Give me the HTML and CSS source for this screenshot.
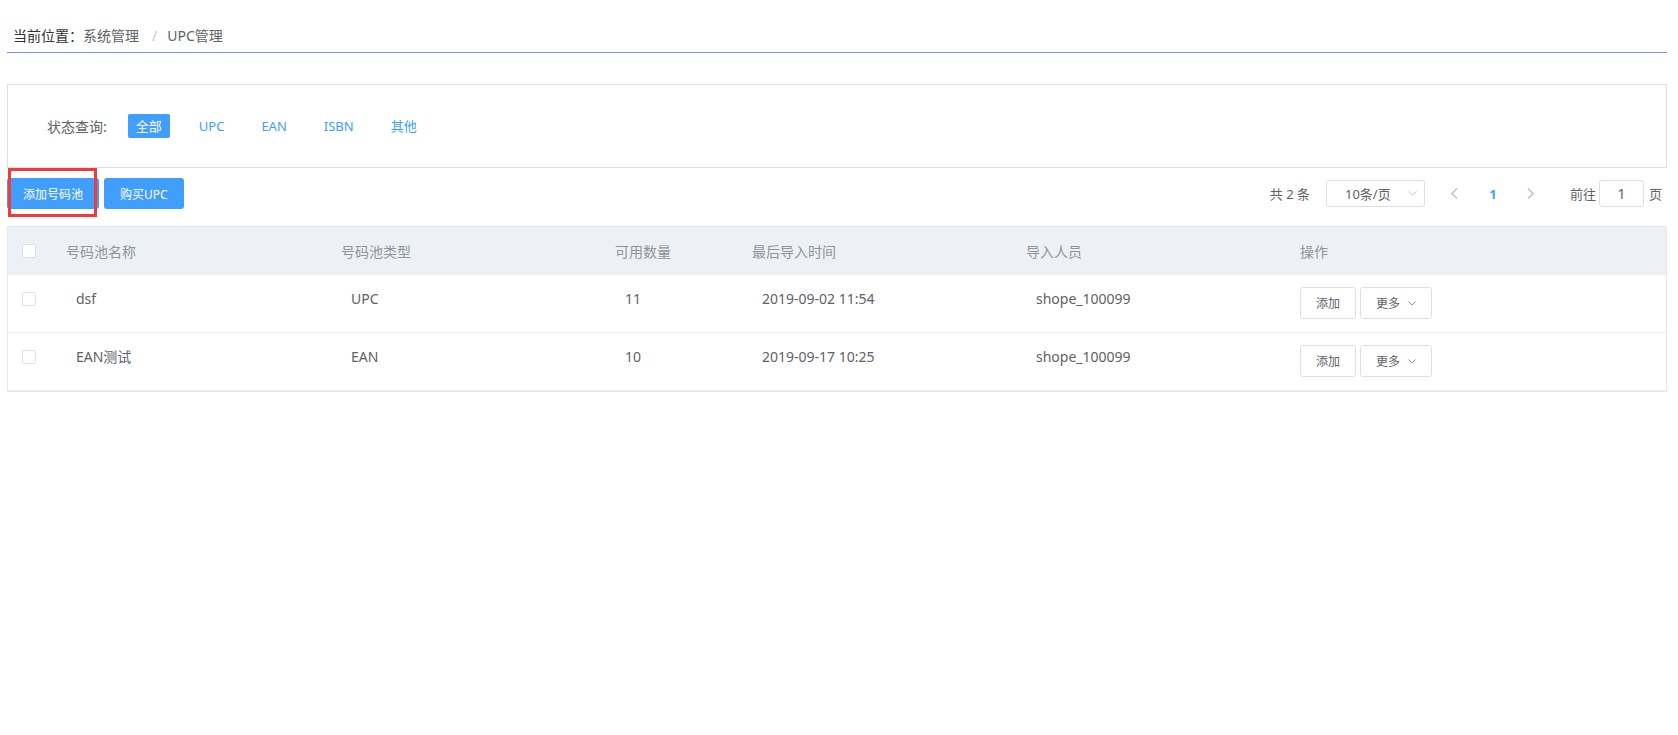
FILE: index.html
```html
<!DOCTYPE html>
<html>
<head>
    <meta charset="utf-8">
    <link rel="stylesheet" href="styles.css">
</head>
<body>
    <div class="page">
        <!-- Breadcrumb -->
        <div class="crumb"><span class="crumb-label">当前位置：</span><span class="crumb-item">系统管理</span><span class="crumb-sep">/</span><span class="crumb-item">UPC管理</span></div>

        <!-- Filter -->
        <div class="filter-panel">
            <span class="filter-label">状态查询:</span>
            <span class="filter-item active">全部</span>
            <span class="filter-item">UPC</span>
            <span class="filter-item">EAN</span>
            <span class="filter-item">ISBN</span>
            <span class="filter-item">其他</span>
        </div>

        <!-- Toolbar -->
        <div class="toolbar">
            <div class="toolbar-left">
                <span class="marked">
                    <button class="btn-primary">添加号码池</button>
                    <span class="red-box"></span>
                </span>
                <button class="btn-primary">购买UPC</button>
            </div>
            <div class="pager">
                <span class="pager-total">共 2 条</span>
                <div class="pager-size">
                    <span>10条/页</span>
                    <svg width="9" height="5" viewBox="0 0 9 5"><polyline points="0.5,0.5 4.5,4.2 8.5,0.5" fill="none" stroke="#c0c4cc" stroke-width="1"/></svg>
                </div>
                <span class="pager-btn pager-prev">
                    <svg width="7" height="11" viewBox="0 0 7 11"><polyline points="6,0.5 1,5.5 6,10.5" fill="none" stroke="#c0c4cc" stroke-width="1.6"/></svg>
                </span>
                <span class="pager-num">1</span>
                <span class="pager-btn">
                    <svg width="7" height="11" viewBox="0 0 7 11"><polyline points="1,0.5 6,5.5 1,10.5" fill="none" stroke="#c0c4cc" stroke-width="1.6"/></svg>
                </span>
                <span class="pager-goto">前往</span>
                <span class="pager-input">1</span>
                <span class="pager-unit">页</span>
            </div>
        </div>

        <!-- Table -->
        <div class="table">
            <div class="table-head">
                <div class="cell-check"><span class="checkbox"></span></div>
                <div class="th">号码池名称</div>
                <div class="th">号码池类型</div>
                <div class="th">可用数量</div>
                <div class="th">最后导入时间</div>
                <div class="th">导入人员</div>
                <div class="th">操作</div>
            </div>
            <div class="table-row">
                <div class="cell-check"><span class="checkbox"></span></div>
                <div class="td">dsf</div>
                <div class="td">UPC</div>
                <div class="td">11</div>
                <div class="td">2019-09-02 11:54</div>
                <div class="td">shope_100099</div>
                <div class="td-actions">
                    <button class="btn-small">添加</button>
                    <button class="btn-small">更多<svg width="8" height="5" viewBox="0 0 8 5"><polyline points="0.5,0.5 4,4 7.5,0.5" fill="none" stroke="#909399" stroke-width="1"/></svg></button>
                </div>
            </div>
            <div class="table-row">
                <div class="cell-check"><span class="checkbox"></span></div>
                <div class="td">EAN测试</div>
                <div class="td">EAN</div>
                <div class="td">10</div>
                <div class="td">2019-09-17 10:25</div>
                <div class="td">shope_100099</div>
                <div class="td-actions">
                    <button class="btn-small">添加</button>
                    <button class="btn-small">更多<svg width="8" height="5" viewBox="0 0 8 5"><polyline points="0.5,0.5 4,4 7.5,0.5" fill="none" stroke="#909399" stroke-width="1"/></svg></button>
                </div>
            </div>
        </div>
    </div>
</body>
</html>
```

FILE: styles.css
```css
body {
    margin: 0;
    background-color: #fff;
    font-family: "Noto Sans", "Noto Sans CJK SC", sans-serif;
    color: #606266;
}

.page {
    padding: 0 11px 0 7px;
}

/* Breadcrumb */
.crumb {
    padding: 26px 0 6px 6px;
    font-size: 14px;
    line-height: 20px;
    border-bottom: 1px solid #7393e6;
}

.crumb-label {
    color: #303133;
}

.crumb-sep {
    margin: 0 10px 0 13px;
    color: #c0c4cc;
}

/* Filter panel */
.filter-panel {
    display: flex;
    align-items: center;
    gap: 21px;
    height: 82px;
    margin-top: 31px;
    padding-left: 39px;
    border: 1px solid #dcdfe6;
}

.filter-label {
    font-size: 14px;
    color: #606266;
}

.filter-item {
    padding: 0 8px;
    height: 24px;
    line-height: 24px;
    font-size: 13px;
    color: #409eff;
    border-radius: 2px;
}

.filter-item.active {
    background-color: #409eff;
    color: #fff;
}

/* Toolbar */
.toolbar {
    display: flex;
    justify-content: space-between;
    align-items: center;
    margin-top: 10px;
}

.toolbar-left {
    display: flex;
    gap: 5px;
}

.marked {
    position: relative;
    display: flex;
}

.red-box {
    position: absolute;
    left: 1px;
    top: -10px;
    width: 83px;
    height: 43px;
    border: 3px solid #f23a3a;
}

.btn-primary {
    height: 31px;
    padding: 0 16px;
    border: none;
    border-radius: 3px;
    background-color: #409eff;
    color: #fff;
    font-family: inherit;
    font-size: 12px;
}

.pager {
    display: flex;
    align-items: center;
    padding-right: 5px;
    font-size: 13px;
    color: #606266;
}

.pager-size {
    display: flex;
    align-items: center;
    justify-content: space-between;
    box-sizing: border-box;
    width: 99px;
    height: 27px;
    margin-left: 16px;
    padding: 0 7px 0 18px;
    border: 1px solid #dcdfe6;
    border-radius: 3px;
}

.pager-btn {
    display: flex;
    justify-content: center;
    width: 30px;
}

.pager-prev {
    margin-left: 15px;
}

.pager-num {
    width: 46px;
    text-align: center;
    color: #409eff;
    font-weight: bold;
}

.pager-goto {
    margin-left: 24px;
}

.pager-input {
    box-sizing: border-box;
    width: 45px;
    height: 27px;
    line-height: 25px;
    margin-left: 3px;
    text-align: center;
    border: 1px solid #dcdfe6;
    border-radius: 3px;
    font-size: 14px;
}

.pager-unit {
    margin-left: 5px;
}

/* Table */
.table {
    margin-top: 17px;
    border: 1px solid #e4e7ed;
}

.table-head,
.table-row {
    display: grid;
    grid-template-columns: 48px 275px 274px 137px 274px 274px 1fr;
}

.table-head {
    height: 48px;
    align-items: center;
    background-color: #edf1f6;
    font-size: 14px;
    color: #909399;
}

.table-row {
    height: 57px;
    align-items: start;
    border-bottom: 1px solid #ebeef5;
    font-size: 14px;
}

.th {
    padding-left: 10px;
}

.td {
    padding: 14px 0 0 20px;
    line-height: 20px;
}

.cell-check {
    display: flex;
    padding-left: 14px;
}

.table-row .cell-check {
    padding-top: 17px;
}

.checkbox {
    box-sizing: border-box;
    width: 14px;
    height: 14px;
    border: 1px solid #dcdfe6;
    border-radius: 2px;
    background-color: #fff;
}

.td-actions {
    display: flex;
    gap: 4px;
    padding: 12px 0 0 10px;
}

.btn-small {
    display: flex;
    align-items: center;
    gap: 8px;
    height: 32px;
    padding: 0 15px;
    border: 1px solid #dcdfe6;
    border-radius: 3px;
    background-color: #fff;
    color: #606266;
    font-family: inherit;
    font-size: 12px;
}
```
